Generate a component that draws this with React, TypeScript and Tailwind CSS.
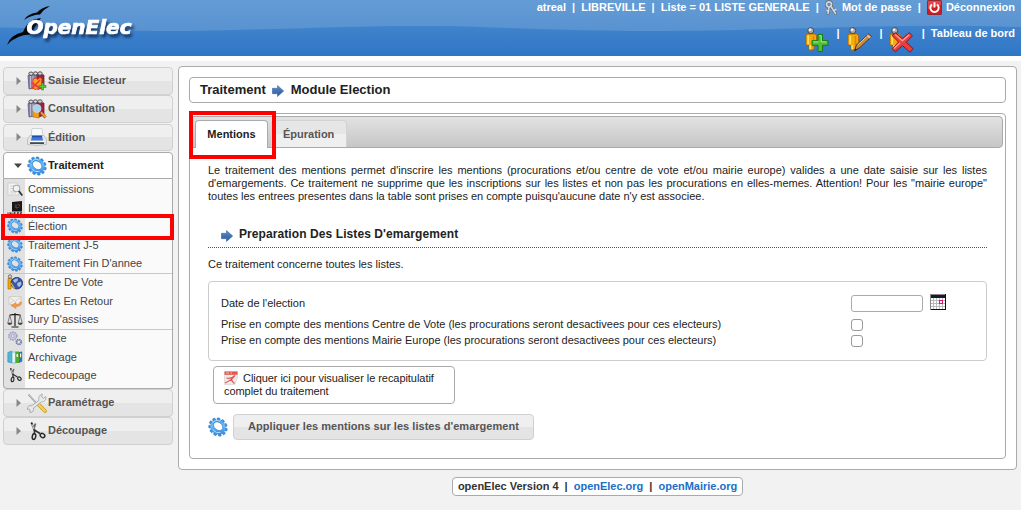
import React from "react";

type P = { className?: string };

const teeth = Array.from({ length: 11 }, (_, i) => (i * 360) / 11);

const Gear = ({ className = "w-5 h-5" }: P) => (
  <svg viewBox="0 0 20 20" className={"shrink-0 " + className}>
    <defs>
      <linearGradient id="gearFill" x1="0" y1="0" x2="1" y2="1">
        <stop offset="0" stopColor="#2f8fe8" />
        <stop offset=".45" stopColor="#6fbcfa" />
        <stop offset="1" stopColor="#2079d8" />
      </linearGradient>
    </defs>
    <g transform="rotate(40 10 10) translate(0 1) scale(1 .9)">
      {teeth.map((a) => (
        <rect key={a} x="8.500" y=".3" width="3" height="4" rx=".7" fill="#3b93e6" stroke="#236fbd" strokeWidth=".5" transform={`rotate(${a} 10 10)`} />
      ))}
      <path fillRule="evenodd" d="M10 2.200a7.800 7.800 0 0 1 0 15.600 7.800 7.800 0 0 1 0-15.600zM9.500 5c-2.900 0-5 1.700-5 4.100s2.100 4.200 5 4.200 5.300-1.800 5.300-4.200S12.400 5 9.500 5z" fill="url(#gearFill)" />
      <ellipse cx="9.600" cy="9.200" rx="5.200" ry="4.200" fill="none" stroke="#2874c2" strokeWidth=".6" />
      <path d="M3.300 10.500a6.600 6.600 0 0 1 4.500-7M8 16.200q5 .8 7.500-3.200" fill="none" stroke="#b9e0ff" strokeWidth=".9" />
    </g>
  </svg>
);

const Arrow = ({ className = "w-3 h-3" }: P) => (
  <svg viewBox="0 0 12 12" className={"shrink-0 " + className}>
    <defs>
      <linearGradient id="arrowFill" x1="0" y1="0" x2="0" y2="1">
        <stop offset="0" stopColor="#5f8cc4" />
        <stop offset="1" stopColor="#28589c" />
      </linearGradient>
    </defs>
    <path d="M.3 3.300H5.500V.5L11.700 6 5.500 11.500V8.700H.3z" fill="url(#arrowFill)" stroke="#3f6cab" strokeWidth=".6" />
  </svg>
);

const Body = () => (
  <>
    <path d="M1 8.500Q1 7 3 7h6.500q2 0 2 2v8H9v5.500l-5 1V18H1z" fill="#f7a80a" stroke="#a86200" strokeWidth=".8" />
    <path d="M3.200 8.500v9M5.200 18v4" stroke="#ffdf55" strokeWidth="1.800" />
    <path d="M8.500 9v12" stroke="#dd8500" strokeWidth="1.400" />
    <circle cx="5.800" cy="3.600" r="3" fill="#a9adb3" stroke="#3f4247" strokeWidth=".9" />
    <circle cx="5" cy="2.800" r="1.300" fill="#f4f4f4" />
  </>
);

const UserAdd = () => (
  <svg viewBox="0 0 26 26" className="h-[26px] w-[26px] shrink-0">
    <Body />
    <path d="M13 7.500h4.500v6.200H23v4.600h-5.500v6.200H13v-6.200H7v-4.600h6z" fill="#51bd38" stroke="#177c12" />
    <path d="M14.200 8.700h2v6.200h5.500M8.200 14.900h5.500" fill="none" stroke="#a9ed8b" strokeWidth="1" />
  </svg>
);
const UserEdit = () => (
  <svg viewBox="0 0 26 26" className="h-[26px] w-[26px] shrink-0">
    <Body />
    <path d="M21.500 7l3 2.500L13 20.500l-5.500 3.300 1.800-5.500z" fill="#c98a42" stroke="#5f3514" />
    <path d="M20.300 8.300l3 2.500" stroke="#e6c0b0" strokeWidth="1.800" />
    <path d="M10.700 18L19.500 9.700" stroke="#f6ce83" />
    <path d="M7.500 24l2.500-1.500-1.700-1.300z" fill="#222" />
  </svg>
);
const UserDelete = () => (
  <svg viewBox="0 0 26 26" className="h-[26px] w-[26px] shrink-0">
    <Body />
    <path d="M3 8.500L6.500 5.700l6.800 6 7-6 3.200 3-6.300 6.600 7 6.400-3.200 3.500-7.500-6.500-7.300 6.200-3-3.200 6.500-6.600z" fill="#e83f3f" stroke="#961414" />
    <path d="M6.200 7.500l7.200 6.300 6.700-6M5 21.500l6-5.700" fill="none" stroke="#ff9c92" strokeWidth="1.300" />
  </svg>
);
const Keys = () => (
  <svg viewBox="0 0 14 16" className="h-4 w-3.5 shrink-0">
    <g fill="none" strokeLinecap="round">
      <circle cx="4" cy="4.300" r="2.500" stroke="#62676c" strokeWidth="2.900" />
      <path d="M4 7.200L3 13.500M6 6.500l4.500 7" stroke="#62676c" strokeWidth="3" />
      <circle cx="4" cy="4.300" r="2.500" stroke="#d5d7d9" strokeWidth="1.700" />
      <path d="M4 7.200L3 13.500M6 6.500l4.500 7" stroke="#d0d2d4" strokeWidth="1.700" />
      <path d="M9 10.500l2-1.200M3.800 11l-1.800-.4" stroke="#e6e8ea" strokeWidth="1.200" />
    </g>
  </svg>
);
const Power = () => (
  <svg viewBox="0 0 15 15" className="h-[15px] w-[15px] shrink-0">
    <rect x=".4" y=".4" width="14.200" height="14.200" rx="1" fill="#cf1b20" stroke="#9c1114" strokeWidth=".8" />
    <path d="M1 1h13v4L1 9z" fill="#e7595a" opacity=".7" />
    <path d="M5 4.500a4.200 4.200 0 1 0 5 0M7.500 2.300v5.200" fill="none" stroke="#fff" strokeWidth="1.900" />
  </svg>
);

const Binders = () => (
  <>
    <path d="M1 4.500l9-1.500v13.500l-8 1.500z" fill="#8384a8" stroke="#4f4f72" strokeWidth=".7" />
    <path d="M10 3l7 1v12l-6 2.500z" fill="#9c2440" stroke="#74142a" strokeWidth=".7" />
    <path d="M3.500 5v12M6 5v12" stroke="#bcbcd5" strokeWidth="1" />
    <g fill="#d9d9dc" stroke="#4d4d52" strokeWidth="1">
      <ellipse cx="4" cy="2.700" rx="2.200" ry="1.700" />
      <ellipse cx="8.500" cy="2.500" rx="2" ry="1.700" />
      <ellipse cx="13" cy="2.500" rx="2.200" ry="1.700" />
    </g>
  </>
);
const Saisie = () => (
  <svg viewBox="0 0 20 20" className="h-5 w-5 shrink-0">
    <Binders />
    <path d="M6 8l3-1 1.500 1.500L13 6.500l2 1.500-1 9-6 1.500-2-1.500z" fill="#f9a51c" stroke="#e0381a" strokeWidth=".9" />
    <path d="M4.500 11.500l8 5.500M13 9L4.500 18" stroke="#ef3c37" strokeWidth="1.700" />
    <path d="M14.500 12h2v2.500H19v2h-2.500V19h-2v-2.500H12v-2h2.500z" fill="#57ca3d" stroke="#248d17" strokeWidth=".6" />
  </svg>
);
const Consult = () => (
  <svg viewBox="0 0 20 20" className="h-5 w-5 shrink-0">
    <Binders />
    <path d="M6 9h6v10l-6-1z" fill="#f3a20f" stroke="#b76c06" strokeWidth=".6" />
    <circle cx="10" cy="9.500" r="4" fill="#a9d3f0" stroke="#c9d3db" strokeWidth=".9" />
    <path d="M14 13.500l4.500 5" stroke="#a15a18" strokeWidth="3" />
    <path d="M14 13.200l4.500 5" stroke="#f4a23b" strokeWidth="1.700" />
  </svg>
);
const Printer = () => (
  <svg viewBox="0 0 20 20" className="h-5 w-5 shrink-0">
    <path d="M5 1.500h10l1 8H4z" fill="#f8f9fa" stroke="#c0c4c9" strokeWidth=".7" />
    <path d="M3 8.500h14l2.500 4v5q-9.500 2-19 0v-5z" fill="#e3e5e9" stroke="#adb1b8" strokeWidth=".7" />
    <path d="M5 8.700h10l1 4.800H4z" fill="#3b76d8" />
    <path d="M5 8.700h10v1.500H5z" fill="#1f4fa5" />
    <path d="M3 15.300h14v1.600H3z" fill="#33373c" />
    <path d="M3 14.500h14" stroke="#fff" />
  </svg>
);
const Tools = () => (
  <svg viewBox="0 0 20 20" className="h-5 w-5 shrink-0">
    <path d="M1.500 1.500l9 10" stroke="#83878a" strokeWidth="1.600" />
    <path d="M1.500 1.500l9 10" stroke="#eee" strokeWidth=".7" />
    <path d="M11 11l7 7" stroke="#b88915" strokeWidth="3.600" strokeLinecap="round" />
    <path d="M11 11l7 7" stroke="#f5cd50" strokeWidth="2.500" strokeLinecap="round" />
    <path d="M12 7.300c-.7-2.500 0-5.200 3.200-6.300l-.5 3 1.700 1.200 2.500-1.700c.5 3.500-1.500 5.500-4.600 5.500L6.500 15c.6 2.700-.7 4.500-3.600 4.500l.3-2.500-1.200-1-1.700.5c0-3 2-4.500 4.500-3.800z" fill="#e8e9e9" stroke="#929698" strokeWidth=".7" />
  </svg>
);
const Scissors = ({ className = "w-5 h-5" }: P) => (
  <svg viewBox="0 0 20 20" className={"shrink-0 " + className}>
    <path d="M4.500 2l3.500 8M8.500 2.500l-2 6" stroke="#66686b" strokeWidth="1.900" />
    <path d="M5.200 3.500l2.300 5.500" stroke="#f2f2f2" strokeWidth=".7" />
    <circle cx="4.700" cy="2.200" r=".9" fill="#222" />
    <path d="M6.500 8.500l6.500 4M7.500 8.500v4" stroke="#333" strokeWidth="1.600" />
    <ellipse cx="7" cy="15.500" rx="1.700" ry="2.900" transform="rotate(12 7 15.500)" fill="none" stroke="#2b2b2b" strokeWidth="1.500" />
    <ellipse cx="15.500" cy="14.500" rx="2.500" ry="1.900" transform="rotate(40 15.500 14.500)" fill="none" stroke="#2b2b2b" strokeWidth="1.500" />
  </svg>
);

const S = ({ children }: { children: React.ReactNode }) => (
  <svg viewBox="0 0 16 16" className="h-4 w-4 shrink-0">{children}</svg>
);
const SearchDoc = () => (
  <S>
    <path d="M1 2h8l3 2.500V14H1z" fill="#f4f4f4" stroke="#c9c9c9" strokeWidth=".8" />
    <path d="M3 5h6M3 7.500h3M3 10h4M3 12h6" stroke="#cfcfcf" />
    <circle cx="9.500" cy="7.500" r="3.300" fill="#f1f4f6" stroke="#aaa" strokeWidth="1.100" />
    <path d="M11.800 10l3.500 4.500" stroke="#333" strokeWidth="1.800" />
  </S>
);
const InseeIcon = () => (
  <S>
    <path d="M5 2l10-1v10.500H5z" fill="#17181a" />
    <path d="M8 4l2 5M11 3.500l-3 4h4" stroke="#55585b" strokeWidth=".6" fill="none" />
    <path d="M11.500 4l1.500 2.500" stroke="#c3504b" strokeWidth=".8" />
    <path d="M1 12.500v3M3 15.500v-3l2 3v-3M8.500 12.700H7v1.200h1.500v1.300H7M12 12.700h-1.700v2.600H12M10.300 14H12M15 12.700h-1.700v2.600H15M13.300 14H15" stroke="#222" strokeWidth=".9" fill="none" />
  </S>
);
const Globe = () => (
  <S>
    <path d="M1 4.500h4v7H4V15H1z" fill="#f0a60e" stroke="#9d6800" strokeWidth=".6" />
    <circle cx="3" cy="2.500" r="1.700" fill="#d8d8d8" stroke="#57564f" strokeWidth=".8" />
    <circle cx="9.800" cy="9.200" r="5.800" fill="#3557a4" stroke="#1c2f6a" strokeWidth=".8" />
    <path d="M6 6.500q2-2.500 5-2l-.5 2.500-2.500 2zM10 9l4-1.500.5 2.500-2 3-2-1z" fill="#a6bde5" />
    <path d="M4 9l3.500 5.500" stroke="#f1c128" strokeWidth="1.200" />
  </S>
);
const Mail = () => (
  <S>
    <path d="M2 3.500h12v8H2z" fill="#f1eeeb" stroke="#cac5bf" strokeWidth=".7" />
    <path d="M2 4l6 4.500L14 4M2 11.500L6.500 7.500" fill="none" stroke="#d0c6bc" strokeWidth=".8" />
    <path d="M14.500 9q.2 4.500-5.500 4.500v2L4 12.500l5-3v2q3.500 0 4-2.500z" fill="#f09a4c" stroke="#db833a" strokeWidth=".5" />
  </S>
);
const Scales = () => (
  <S>
    <path d="M8 1v13M4.500 15h7M2.500 3.300Q8 1.500 13.500 3.300" fill="none" stroke="#1e1e1e" strokeWidth="1.200" />
    <path d="M2.800 3.200L.8 11h4zM13.200 3.200l-2 7.800h4z" fill="none" stroke="#555" strokeWidth=".7" />
    <path d="M.3 11h5q-.8 2-2.500 2T.3 11zM10.700 11h5q-.8 2-2.500 2t-2.500-2z" fill="#444" />
  </S>
);
const Gears = () => (
  <S>
    <circle cx="5.800" cy="6" r="3.600" fill="#d4d6e8" stroke="#9a9dbd" strokeWidth="2.200" strokeDasharray="1.600 .66" />
    <circle cx="5.800" cy="6" r="2.600" fill="none" stroke="#c2c5dc" strokeWidth="1.500" />
    <circle cx="5.800" cy="6" r="1.500" fill="#ececf0" stroke="#8589ac" strokeWidth=".6" />
    <circle cx="11.800" cy="12" r="2.500" fill="#b8bddb" stroke="#747aa8" strokeWidth="1.700" strokeDasharray="1.300 .66" />
    <circle cx="11.800" cy="12" r="1" fill="#eee" />
  </S>
);
const Archive = () => (
  <S>
    <path d="M.8 3.500L4.500 2v12l-3.700-1z" fill="#4fb6d5" stroke="#2785a5" strokeWidth=".5" />
    <path d="M5 3h3.500v11H5z" fill="#dff2f6" stroke="#4da7bc" strokeWidth=".6" />
    <path d="M8.500 2.500H12V14H8.500z" fill="#4eab38" />
    <path d="M12 3l3.200-.5v10L12 14z" fill="#3074bd" />
    <path d="M6 5h1.500v4H6zM9.500 5H11v3H9.500zM13 4.500h1.200v3.800H13z" fill="#fff8c9" />
  </S>
);
const Pdf = () => (
  <svg viewBox="0 0 14 14" className="-mt-px mr-[5px] h-3.5 w-3.5 shrink-0">
    <path d="M.5.500h13V6L11 13.500H.5z" fill="#f1e8e8" stroke="#d8cece" strokeWidth=".6" />
    <path d="M.5.500h13v3.300H.5z" fill="#df5750" />
    <path d="M2 2h3M6.500 2h1.500" stroke="#ffd7d1" strokeWidth=".8" />
    <path d="M1 12Q8 9 11 4.500q-4 4-8.500 2.500M7.500 7.500q0 3 3 5" fill="none" stroke="#dc5a50" strokeWidth="1.200" />
  </svg>
);
const Calendar = () => (
  <svg viewBox="0 0 16 16" className="h-4 w-4 shrink-0" shapeRendering="crispEdges">
    <rect width="16" height="16" fill="#111" />
    <rect x="1" y="4" width="14" height="11" fill="#bbb" />
    <rect y="0" width="15" height="1" fill="#888" />
    <rect y="0" width="1" height="16" fill="#888" />
    <rect x="1" y="1" width="14" height="3" fill="#151b2c" />
    {[4, 7, 10, 13].map((y) => [1, 4, 7, 10, 13].map((x) => <rect key={x + "-" + y} x={x} y={y} width="2" height="2" fill="#fff" />))}
    <rect x="9.500" y="6.500" width="3" height="3" fill="#fff" stroke="#e5147a" />
  </svg>
);

const Logo = () => (
  <svg viewBox="0 0 140 50" className="h-[50px] w-[140px] shrink-0">
    <path d="M24 20Q27 14 37 12.500 42 7 50 6 44 9 40 14.500 32 14.500 24 20zM7 45Q10 35 23 32 27 22 34 19.500L41 18 30 34.500Q16 35 7 45z" fill="#050505" />
    <text x="26.500" y="33.500" textLength="105" lengthAdjust="spacingAndGlyphs" strokeWidth=".7" className="fill-white stroke-white font-['DejaVu_Sans_Condensed','DejaVu_Sans',sans-serif] text-[20px] font-bold italic drop-shadow-[2px_3px_1.500px_rgba(5,25,60,0.75)]">OpenElec</text>
  </svg>
);

const Header = () => (
  <header className="relative h-14 bg-linear-to-b from-[#4f8fd2] to-[#2e76c6] text-white">
    <svg viewBox="0 0 1021 56" className="absolute inset-0 h-14 w-full">
      <defs>
        <linearGradient id="sheen" x1="0" y1="0" x2="0" y2="1">
          <stop offset="0" stopColor="#649cd5" />
          <stop offset="1" stopColor="#5892d0" />
        </linearGradient>
      </defs>
      <path d="M0 0H1021V27Q960 25 900 26C790 28 740 31 650 31 560 31 500 27 440 26 350 25 250 31 170 31 90 31 40 28 0 27.500z" fill="url(#sheen)" />
    </svg>
    <div className="relative flex justify-between pr-[6px]">
      <Logo />
      <div className="flex flex-col items-end text-[11px] font-bold leading-[13px]">
        <div className="flex h-[15px] whitespace-pre pt-[1px]">
          <span>atreal  |  LIBREVILLE  |  Liste = 01 LISTE GENERALE  |  </span>
          <span className="-mt-[1px] mr-[3px]"><Keys /></span>
          <span>Mot de passe  |  </span>
          <span className="-mt-px mr-1"><Power /></span>
          <span>Déconnexion</span>
        </div>
        <div className="mt-3 flex whitespace-pre leading-[13px]">
          <UserAdd /><span className="ml-[6px] mr-[7px]">|</span>
          <UserEdit /><span className="ml-[7px] mr-[6px]">|</span>
          <UserDelete /><span className="ml-[7px]">|  Tableau de bord</span>
        </div>
      </div>
    </div>
  </header>
);

const MenuHead = ({ label, icon }: { label: string; icon: React.ReactNode }) => (
  <div className="flex h-[27.500px] items-center rounded-[4px] border border-[#d0d0d0] bg-linear-to-b from-[#efefef] from-50% to-[#e4e4e4] to-50% pl-[12px] text-[#555]">
    <svg viewBox="0 0 5 8" className="h-2 w-[5px]"><path d="M.5 0L5 4 .5 8z" fill="#888" /></svg>
    <span className="ml-[5px] flex w-[22px] justify-center">{icon}</span>
    <span className="pb-px font-bold tracking-[-0.02px]">{label}</span>
  </div>
);

const items: { label: string; icon: React.ReactNode; sep?: boolean }[] = [
  { label: "Commissions", icon: <SearchDoc /> },
  { label: "Insee", icon: <InseeIcon /> },
  { label: "Élection", icon: <Gear className="h-4 w-4" /> },
  { label: "Traitement J-5", icon: <Gear className="h-4 w-4" /> },
  { label: "Traitement Fin D'annee", icon: <Gear className="h-4 w-4" /> },
  { label: "Centre De Vote", icon: <Globe />, sep: true },
  { label: "Cartes En Retour", icon: <Mail /> },
  { label: "Jury D'assises", icon: <Scales /> },
  { label: "Refonte", icon: <Gears />, sep: true },
  { label: "Archivage", icon: <Archive /> },
  { label: "Redecoupage", icon: <Scissors className="h-4 w-4" /> },
];

const Sidebar = () => (
  <nav className="relative flex w-[170px] shrink-0 flex-col">
    <div className="flex h-[85px] flex-col gap-[0.800px]">
      <MenuHead label="Saisie Electeur" icon={<Saisie />} />
      <MenuHead label="Consultation" icon={<Consult />} />
      <MenuHead label="Édition" icon={<Printer />} />
    </div>
    <div className="flex h-[27px] items-center rounded-t-[4px] border border-[#aaa] bg-white pl-[10px] text-[#212121]">
      <svg viewBox="0 0 8 5" className="h-[5px] w-2"><path d="M0 .5h8L4 5z" fill="#454545" /></svg>
      <span className="ml-1 flex w-[22px] justify-center"><Gear /></span>
      <span className="pb-px font-bold">Traitement</span>
    </div>
    <div className="h-[210px] rounded-b-[4px] border border-t-0 border-[#aaa] bg-[linear-gradient(to_right,#e1e1e1_21px,#fafafa_21px)] pt-[0.830px]">
      {items.map((it) => (
        <div key={it.label} className="relative flex h-[18.640px] items-center pl-[3px] text-[#444]">
          {it.sep && <div className="absolute inset-x-0 top-0 h-px bg-[#c8c8c8]" />}
          {it.icon}
          <span className="ml-[5px]">{it.label}</span>
        </div>
      ))}
    </div>
    <div className="flex flex-col gap-[0.800px]">
      <MenuHead label="Paramétrage" icon={<Tools />} />
      <MenuHead label="Découpage" icon={<Scissors />} />
    </div>
    <div className="absolute -left-[2px] top-[147px] h-[26px] w-[173px] border-4 border-[#f00]" />
  </nav>
);

const Content = () => (
  <div className="px-[18px] pt-[16px] text-[#222]">
    <p className="text-justify leading-[13px]">
      Le traitement des mentions permet d'inscrire les mentions (procurations et/ou centre de vote et/ou mairie europe) valides a une date saisie sur les listes d'emargements. Ce traitement ne supprime que les inscriptions sur les listes et non pas les procurations en elles-memes. Attention! Pour les "mairie europe" toutes les entrees presentes dans la table sont prises en compte puisqu'aucune date n'y est associee.
    </p>
    <div className="mt-[24px] flex h-[21px] items-start border-b border-dotted border-[#555] pl-[13px]">
      <Arrow className="mt-[3px] h-3 w-3" />
      <h3 className="ml-[6px] text-[12px] font-bold leading-[14px] tracking-[0.085px]">Preparation Des Listes D'emargement</h3>
    </div>
    <p className="mt-[10px] leading-[13px]">Ce traitement concerne toutes les listes.</p>
    <div className="mt-[10px] h-[80px] rounded-[4px] border border-[#ccc] pl-[12px] pt-[12px] leading-[13px]">
      <div className="flex h-[18px] items-center">
        <span className="w-[630px]">Date de l'election</span>
        <input aria-label="Date" className="h-[17px] w-[72px] rounded-[3px] border border-[#aaa] bg-white" />
        <span className="-mt-[3px] ml-[7px]"><Calendar /></span>
      </div>
      {[
        "Prise en compte des mentions Centre de Vote (les procurations seront desactivees pour ces electeurs)",
        "Prise en compte des mentions Mairie Europe (les procurations seront desactivees pour ces electeurs)",
      ].map((t, i) => (
        <div key={t} className={i === 0 ? "mt-[4px] flex h-4 items-center" : "flex h-4 items-center"}>
          <span className="w-[630px]">{t}</span>
          <input type="checkbox" aria-label={t} className="mt-px h-3 w-3 appearance-none rounded-[3px] border border-[#999] bg-white" />
        </div>
      ))}
    </div>
    <div className="ml-[5px] mt-[5px] h-[38px] w-[242px] rounded-[4px] border border-[#aaa] px-[10px] pt-[5px] leading-[13px]">
      <div className="flex h-[13px] whitespace-nowrap tracking-[-0.055px]"><Pdf />Cliquer ici pour visualiser le recapitulatif</div>
      <div className="tracking-[-0.055px]">complet du traitement</div>
    </div>
    <div className="mt-[10px] flex items-center gap-[5px]">
      <Gear />
      <button className="h-[26px] w-[301px] rounded-[4px] border border-[#d0d0d0] bg-linear-to-b from-[#efefef] from-50% to-[#e4e4e4] to-50% pb-px text-[11px] font-bold tracking-[0.035px] text-[#555]">Appliquer les mentions sur les listes d'emargement</button>
    </div>
  </div>
);

export default function App() {
  return (
    <div className="h-[510px] w-[1021px] overflow-hidden bg-[#f2f2f2] font-['Liberation_Sans',Arial,sans-serif] text-[11px]">
      <Header />
      <div className="h-[5px] bg-white" />
      <div className="flex gap-[5px] pl-[3px] pt-[5px]">
        <div className="pt-px"><Sidebar /></div>
        <main className="h-[404px] w-[839px] rounded-[4px] border border-[#aaa] bg-white px-[10px] pt-[10px]">
          <div className="flex h-[26px] items-center rounded-[4px] border border-[#aaa] pl-[10px] text-[13px] font-bold text-[#212121]">
            <span>Traitement</span>
            <Arrow className="ml-[6px] mr-[7px] mt-[2px] h-3 w-3" />
            <span>Module Election</span>
          </div>
          <section className="relative mt-[10px] h-[346px] rounded-[4px] border border-[#aaa] pt-[2px]">
            <div className="mr-[2px] flex h-[32px] items-end rounded-[4px] border border-[#aaa] bg-linear-to-b from-[#e2e2e2] to-[#c6c6c6] pl-[4px] text-[11px] font-bold">
              <div className="-mb-px flex h-[28px] w-[73px] items-center justify-center rounded-t-[4px] border border-b-0 border-[#aaa] bg-white text-[#212121]">Mentions</div>
              <div className="ml-[3px] flex h-[27px] w-[76px] items-center rounded-t-[4px] border border-b-0 border-[#d3d3d3] bg-linear-to-b from-[#e6e6e6] from-50% to-[#efefef] to-50% pl-[11px] text-[#555]">Épuration</div>
            </div>
            <Content />
            <div className="absolute -left-px -top-[3px] h-[48px] w-[87px] border-4 border-[#f00]" />
          </section>
        </main>
      </div>
      <footer className="mt-[7px] flex justify-center pl-[174px]">
        <div className="flex h-[19px] items-center whitespace-pre rounded-[4px] border border-[#aaa] bg-white px-[5px] font-bold tracking-[-0.015px] text-[#333]">
          openElec Version 4  |  <a className="text-[#1b6fc8]">openElec.org</a>  |  <a className="text-[#1b6fc8]">openMairie.org</a>
        </div>
      </footer>
    </div>
  );
}
